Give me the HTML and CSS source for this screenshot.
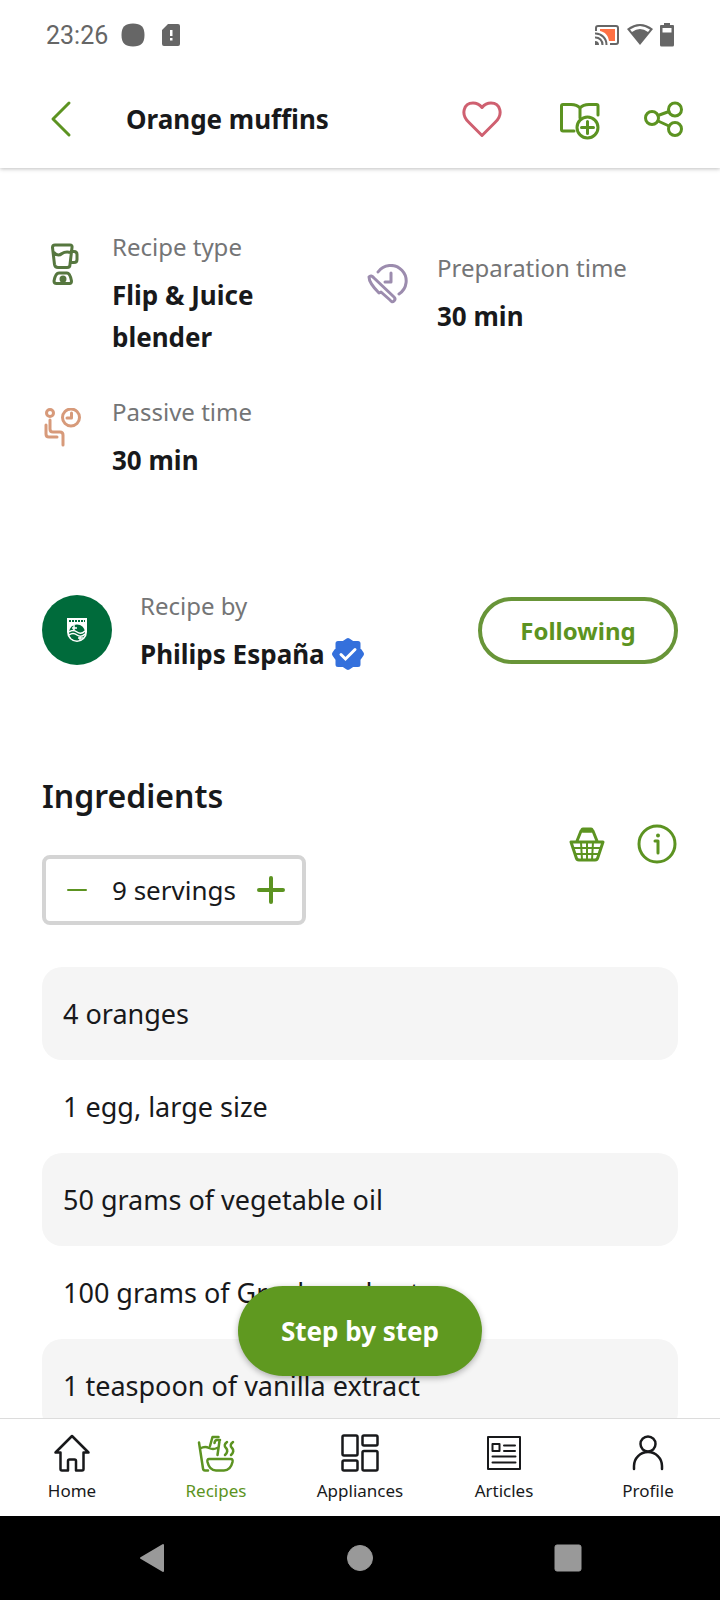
FILE: index.html
```html
<!DOCTYPE html>
<html lang="en">
<head>
    <meta charset="UTF-8">
    <meta name="viewport" content="width=device-width, initial-scale=1.0">
    <title>Orange muffins</title>
    <link rel="stylesheet" href="styles.css">
</head>
<body>
    <div class="status-bar">
        <span class="time">23:26</span>
        <svg class="status-dot" width="24" height="24" viewBox="0 0 24 24"><path d="M12 0.500C20 0.500 23.500 4 23.500 12S20 23.500 12 23.500 0.500 20 0.500 12 4 0.500 12 0.500z"/></svg>
        <svg class="status-sd" width="20" height="24" viewBox="0 0 20 24"><path fill-rule="evenodd" d="M7 1h10a2 2 0 0 1 2 2v18a2 2 0 0 1-2 2H3a2 2 0 0 1-2-2V7zM9 7v6h2.500V7zM9 15v2.500h2.500v-2.500z"/></svg>
        <div class="status-right">
            <svg width="26" height="24" viewBox="0 0 26 24">
                <path fill="#ff7043" d="M6 6h15v12h-6C14 12 11 9 6 8z"/>
                <g fill="none" stroke="#666" stroke-width="2">
                    <path d="M2 8V5q0-2 2-2h18q2 0 2 2v14q0 2-2 2h-6"/>
                    <path d="M1 10.500a11 11 0 0 1 11.500 11.500M1 14.500a7 7 0 0 1 7.500 7.500"/>
                </g>
                <path d="M1 18a4 4 0 0 1 4 4H1z"/>
            </svg>
            <svg width="26" height="24" viewBox="0 0 26 24">
                <path d="M0 6Q13-4 26 6L13 22z"/>
                <path fill="#fff" d="M3 6.500Q13-0.500 23 6.500L21 9Q13 3 5 9z"/>
            </svg>
            <svg width="14" height="24" viewBox="0 0 14 24"><path fill-rule="evenodd" d="M4 0h6v2h3q1 0 1 1v19q0 1.500-1.500 1.500h-11Q0 23.500 0 22V3q0-1 1-1h3zM2.500 5v4.500h9V5z"/></svg>
        </div>
    </div>

    <header class="header">
        <button class="icon-button" aria-label="Back">
            <svg class="icon" viewBox="0 0 42 42"><path d="M29 5L13 21l16 16"/></svg>
        </button>
        <h1 class="title">Orange muffins</h1>
        <div class="actions">
            <button class="icon-button favourite" aria-label="Favourite">
                <svg class="icon" viewBox="0 0 42 42"><path d="M21 37.500L8 24.500C-1 16 3 5 12 5c4 0 7 2 9 4.500C23 7 26 5 30 5c9 0 13 11 4 19.500z"/></svg>
            </button>
            <button class="icon-button" aria-label="Add to recipe book">
                <svg class="icon" viewBox="0 0 42 42">
                    <path d="M15 33H4q-1.500 0-1.500-1.500V8Q2.500 6.500 4 6.500h8q6 0 9 3.500 3-3.500 9-3.500h7.500Q39 6.500 39 8v9M21 10v10"/>
                    <circle cx="28.500" cy="29.500" r="10.500"/>
                    <path d="M22.500 29.500h12M28.500 23.500v12"/>
                </svg>
            </button>
            <button class="icon-button" aria-label="Share">
                <svg class="icon" viewBox="0 0 42 42">
                    <circle cx="9" cy="20" r="6.500"/><circle cx="32" cy="11.500" r="6.500"/><circle cx="32" cy="31" r="6.500"/>
                    <path d="M15 17.500l11-4M15 23l11 5"/>
                </svg>
            </button>
        </div>
    </header>

    <main class="content">
        <section class="details">
            <div class="detail">
                <svg class="icon blender" viewBox="0 0 42 42">
                    <path d="M13 2h15q2.500 0 2 2.500l-2 17q0 3-3 3h-9q-3 0-3.500-3l-2-17Q10.500 2 13 2zM12 9.500q4 4.500 8 1 3.500-2.500 9-1M30 8.500h2q3 0 3 3v5q0 3-3 3h-3M17 30h8q3 0 4.500 8 0 2.500-2 2.500h-13q-2.500 0-2.500-2.500 1.500-8 5-8z"/>
                    <circle class="filled" cx="21" cy="36" r="2"/>
                </svg>
                <div>
                    <p class="label">Recipe type</p>
                    <p class="value">Flip &amp; Juice blender</p>
                </div>
            </div>
            <div class="detail">
                <svg class="icon prep" viewBox="0 0 42 42">
                    <path d="M11 8a15.500 15.500 0 1 1 21 22M18 18h6V9M2 13q2-2.500 5 1l20 19q2 2 0 4t-4-1l-9-8-2 1Q2 19 2 13z"/>
                </svg>
                <div>
                    <p class="label">Preparation time</p>
                    <p class="value">30 min</p>
                </div>
            </div>
            <div class="detail">
                <svg class="icon passive" viewBox="0 0 42 42">
                    <circle cx="8" cy="5" r="3.500"/><circle cx="29" cy="9.500" r="8.500"/>
                    <path d="M29.500 5v5H25M8 12v9q0 3 3 3h7q3 0 3 3v10M4 17v9q0 3 3 3h8"/>
                </svg>
                <div>
                    <p class="label">Passive time</p>
                    <p class="value">30 min</p>
                </div>
            </div>
        </section>

        <section class="author">
            <svg class="avatar" viewBox="0 0 70 70">
                <circle cx="35" cy="35" r="35" fill="#006b3b"/>
                <path fill="#fff" d="M25 23h20v14a10 10 0 0 1-20 0z"/>
                <path stroke="#006b3b" stroke-width="2" stroke-dasharray="2 1" d="M27 26h16"/>
                <circle cx="35" cy="37.500" r="8" fill="#006b3b"/>
                <path fill="none" stroke="#fff" stroke-width="1.500" d="M27 37q4-3 8 0t8-1M27 40q4-3 8 0t8-1M32 30v5M30 33h5M38 41v5M36 43h5"/>
            </svg>
            <div class="author-name">
                <p class="label">Recipe by</p>
                <p class="value">Philips España
                    <svg class="verified" viewBox="0 0 34 34">
                        <path fill="#3470dc" stroke="#3470dc" stroke-width="5" stroke-linejoin="round" d="M17 3.500l4.500 3H27v5.500l3.500 5-3.500 5v5.500h-5.500l-4.500 3-4.500-3H7V22l-3.500-5L7 12V6.500h5.500z"/>
                        <path fill="none" stroke="#fff" stroke-width="3" stroke-linecap="round" d="M10 17.500l4.500 4.500L24 12.500"/>
                    </svg>
                </p>
            </div>
            <button class="following">Following</button>
        </section>

        <section class="ingredients">
            <div class="ingredients-head">
                <div>
                    <h2>Ingredients</h2>
                    <div class="servings">
                        <button aria-label="Fewer servings"><svg class="icon thin" viewBox="0 0 30 30"><path d="M6 15h18"/></svg></button>
                        <span>9 servings</span>
                        <button aria-label="More servings"><svg class="icon" viewBox="0 0 30 30"><path d="M3 15h24M15 3v24"/></svg></button>
                    </div>
                </div>
                <div class="tools">
                    <button class="icon-button" aria-label="Shopping list">
                        <svg class="icon basket" viewBox="0 0 42 42">
                            <path d="M5 19h32l-5 15q-.5 3-3 3H13q-2.500 0-3-3zM11 18l4-10h12l4 10"/>
                            <path class="mesh" d="M7 25h28M9 31h24M15 19l1 18M27 19l-1 18M21 19v18"/>
                            <path class="grip" d="M17 7h8"/>
                        </svg>
                    </button>
                    <button class="icon-button" aria-label="Nutritional info">
                        <svg class="icon" viewBox="0 0 42 42"><circle cx="21" cy="21" r="18"/><path d="M19 18h3v12"/><circle class="dot" cx="22" cy="12.500" r="2"/></svg>
                    </button>
                </div>
            </div>
            <ul class="list">
                <li>4 oranges</li>
                <li>1 egg, large size</li>
                <li>50 grams of vegetable oil</li>
                <li>100 grams of Greek yoghurt</li>
                <li>1 teaspoon of vanilla extract</li>
            </ul>
        </section>
    </main>

    <footer class="footer">
        <button class="step">Step by step</button>
        <nav class="tabs">
            <a href="#">
                <svg class="icon" viewBox="0 0 42 42"><path d="M21 3L4.500 19.500H9.500V36q0 1.500 1.500 1.500h6V28q0-1.500 1.500-1.500h5q1.500 0 1.500 1.500v9.500h6q1.500 0 1.500-1.500V19.500h5z"/></svg>
                Home
            </a>
            <a href="#" class="active">
                <svg class="icon" viewBox="0 0 42 42"><path d="M4 9.500l4 26q.3 2 2 2h3M5 15.500q5-2.500 9-.500t8 0M15 13l2.500-9h6M25 7h-3q-2 0-2.500 3M24.500 8l-2 14M14 26h22q2 0 1.500 3-2 8.500-8.500 8.500h-8q-6.500 0-8.500-8.500Q12 26 14 26zM32 9q-4 3-1 6t-1 7M38 9q-4 3-1 6t-1 7"/></svg>
                Recipes
            </a>
            <a href="#">
                <svg class="icon" viewBox="0 0 42 42"><rect x="3.500" y="2.500" width="15" height="20" rx="1.500"/><rect x="3.500" y="27.500" width="15" height="10" rx="1.500"/><rect x="23.500" y="2.500" width="15" height="10" rx="1.500"/><rect x="23.500" y="18" width="15" height="19.500" rx="1.500"/></svg>
                Appliances
            </a>
            <a href="#">
                <svg class="icon articles" viewBox="0 0 42 42"><path d="M5 4h32v32H5z"/><path d="M9.500 11h7v7h-7zM21 12.500h11M21 18h11M9.500 23.500h23M9.500 29.500h23"/></svg>
                Articles
            </a>
            <a href="#">
                <svg class="icon" viewBox="0 0 42 42"><circle cx="21" cy="11" r="7.500"/><path d="M7 36v-3a14 14 0 0 1 28 0v3"/></svg>
                Profile
            </a>
        </nav>
    </footer>

    <div class="system-nav">
        <button aria-label="Back"><svg viewBox="0 0 28 30"><path stroke-width="2" d="M25 2v26L3 15z"/></svg></button>
        <button aria-label="Home"><svg viewBox="0 0 28 30"><circle cx="14" cy="15" r="12.500"/></svg></button>
        <button aria-label="Overview"><svg viewBox="0 0 28 30"><rect x="1" y="2" width="26" height="26" rx="2"/></svg></button>
    </div>
</body>
</html>
```
FILE: styles.css
```css
* {
    box-sizing: border-box;
}
body {
    margin: 0;
    height: 100vh;
    display: flex;
    flex-direction: column;
    background: #fff;
    color: #18191b;
    font-family: "Noto Sans", sans-serif;
    font-size: 26px;
}
h1, h2, p, ul {
    margin: 0;
    padding: 0;
}
button {
    padding: 0;
    border: none;
    background: none;
    color: inherit;
    font: inherit;
    cursor: pointer;
}
svg {
    display: block;
    flex: none;
}
.icon {
    width: 42px;
    height: 42px;
    fill: none;
    stroke: currentColor;
    stroke-width: 3;
    stroke-linecap: round;
    stroke-linejoin: round;
}
.filled {
    fill: currentColor;
}
.dot {
    fill: currentColor;
    stroke: none;
}

/* status bar */
.status-bar {
    position: relative;
    z-index: 1;
    display: flex;
    align-items: center;
    height: 70px;
    flex: none;
    padding: 0 46px;
    background: #fff;
    color: #666;
    fill: #666;
}
.time {
    font-family: Roboto, sans-serif;
    font-size: 25px;
    margin-right: 13px;
}
.status-dot {
    margin-right: 16px;
}
.status-right {
    display: flex;
    gap: 7px;
    margin-left: auto;
}

/* header */
.header {
    display: flex;
    align-items: center;
    height: 98px;
    flex: none;
    padding: 0 35px 0 40px;
    box-shadow: 0 1px 4px rgba(0, 0, 0, 0.25);
}
.icon-button {
    color: #5c9321;
}
.title {
    margin-left: 44px;
    font-size: 26px;
    font-weight: 700;
}
.actions {
    display: flex;
    gap: 42px;
    margin-left: auto;
}
.favourite {
    margin-right: 14px;
    color: #cf6070;
}

/* recipe */
.content {
    flex: 1;
    min-height: 0;
    overflow: hidden;
    padding: 58px 42px 0;
}
.details {
    display: grid;
    grid-template-columns: 1fr 1fr;
    align-items: center;
    gap: 33px 14px;
}
.detail {
    display: flex;
    gap: 28px;
}
.detail .icon {
    margin-top: 17px;
}
.blender {
    color: #56773f;
}
.prep {
    color: #9c8cae;
}
.passive {
    color: #d79a7a;
}
.label {
    margin-bottom: 6px;
    color: #747576;
    font-size: 24px;
    line-height: 42px;
}
.value {
    font-weight: 700;
    line-height: 42px;
}
.author {
    display: flex;
    align-items: center;
    margin-top: 104px;
}
.avatar {
    width: 70px;
    height: 70px;
}
.author-name {
    margin-left: 28px;
}
.author .value {
    display: flex;
    align-items: center;
    gap: 6px;
}
.verified {
    width: 34px;
    height: 34px;
}
.following {
    margin-left: auto;
    width: 200px;
    height: 67px;
    border: 4px solid #689538;
    border-radius: 34px;
    color: #5c9321;
    font-size: 24px;
    font-weight: 700;
}

/* ingredients */
.ingredients {
    margin-top: 99px;
}
.ingredients-head {
    display: flex;
    justify-content: space-between;
    align-items: center;
}
h2 {
    margin-bottom: 37px;
    font-size: 32px;
    font-weight: 600;
    line-height: 44px;
}
.servings {
    display: flex;
    align-items: center;
    justify-content: space-between;
    gap: 20px;
    height: 70px;
    padding: 0 16px;
    border: 4px solid #d4d4d4;
    border-radius: 8px;
}
.servings button {
    color: #5c9321;
}
.servings .icon {
    width: 30px;
    height: 30px;
    stroke-width: 4;
}
.servings .thin {
    stroke-width: 2;
}
.basket .mesh {
    stroke-width: 2;
}
.basket .grip {
    stroke-width: 5;
}
.tools {
    display: flex;
    gap: 28px;
    padding-bottom: 12px;
}
.list {
    margin-top: 42px;
    font-size: 27px;
    list-style: none;
}
.list li {
    padding: 0 21px;
    border-radius: 20px;
    line-height: 93px;
}
.list li:nth-child(odd) {
    background: #f5f5f5;
}

/* bottom bar */
.footer {
    position: relative;
    flex: none;
    border-top: 1px solid #dcdcdc;
    background: #fff;
}
.step {
    position: absolute;
    bottom: 100%;
    left: 50%;
    width: 244px;
    height: 90px;
    margin: 0 0 43px -122px;
    border-radius: 45px;
    background: #5f9920;
    box-shadow: 0 2px 6px rgba(0, 0, 0, 0.3);
    color: #fff;
    font-weight: 700;
}
.tabs {
    display: grid;
    grid-template-columns: repeat(5, 1fr);
    height: 97px;
    padding-top: 14px;
}
.tabs .icon {
    stroke-width: 2.5;
}
.tabs .articles {
    stroke-width: 2;
}
.tabs a {
    display: flex;
    flex-direction: column;
    align-items: center;
    gap: 4px;
    color: inherit;
    font-size: 17px;
    line-height: 24px;
    text-decoration: none;
}
.tabs .active {
    color: #5c9321;
}
.system-nav {
    display: flex;
    justify-content: center;
    align-items: center;
    gap: 25%;
    height: 84px;
    flex: none;
    background: #000;
}
.system-nav svg {
    width: 28px;
    height: 30px;
    fill: #999;
    stroke: #999;
    stroke-linejoin: round;
}
```
